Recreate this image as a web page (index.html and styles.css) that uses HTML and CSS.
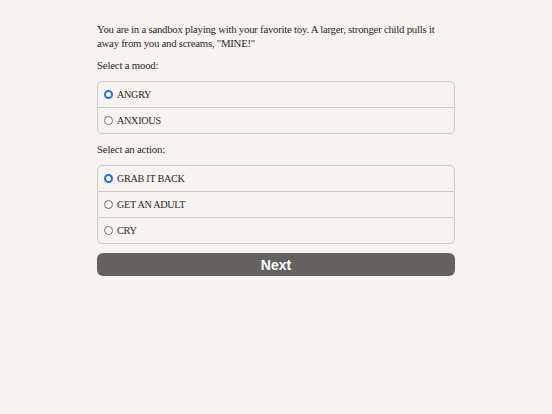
FILE: index.html
```html
<!DOCTYPE html>
<html lang="en">
  <head>
    <meta charset="UTF-8" />
    <meta name="viewport" content="width=device-width, initial-scale=1.0" />
    <title>Sandbox</title>
    <link rel="stylesheet" href="styles.css">
  </head>

  <body>
    <div class="scenario">
      <p class="story">
        You are in a sandbox playing with your favorite toy. A larger, stronger child pulls it
        away from you and screams, "MINE!"
      </p>

      <div class="label">Select a mood:</div>
      <div class="choices">
        <label class="choice">
          <input type="radio" name="mood" checked />
          ANGRY
        </label>
        <label class="choice">
          <input type="radio" name="mood" />
          ANXIOUS
        </label>
      </div>

      <div class="label">Select an action:</div>
      <div class="choices">
        <label class="choice">
          <input type="radio" name="action" checked />
          GRAB IT BACK
        </label>
        <label class="choice">
          <input type="radio" name="action" />
          GET AN ADULT
        </label>
        <label class="choice">
          <input type="radio" name="action" />
          CRY
        </label>
      </div>

      <button id="next-btn">Next</button>
    </div>
  </body>
</html>
```

FILE: styles.css
```css
body {
  margin: 0;
  background-color: #f7f3f0;
  font-family: "Liberation Serif", "DejaVu Serif", serif;
  color: #2a2a2a;
}

.scenario {
  display: flex;
  flex-direction: column;
  width: 358px;
  margin: 0 auto;
  padding-top: 22px;
}

.story {
  margin: 0 0 8px;
  font-size: 10.8px;
  letter-spacing: -0.25px;
  line-height: 14px;
}

.label {
  font-size: 10.8px;
  letter-spacing: -0.2px;
  line-height: 14px;
  margin-bottom: 9px;
}

.choices {
  display: flex;
  flex-direction: column;
  border: 1px solid #cfcbc8;
  border-radius: 5px;
  margin-bottom: 8px;
}

.choice {
  display: flex;
  align-items: center;
  height: 25px;
  padding-left: 6px;
  font-size: 10.2px;
  letter-spacing: -0.3px;
}

.choice + .choice {
  border-top: 1px solid #cfcbc8;
}

.choice input {
  appearance: none;
  box-sizing: border-box;
  width: 9px;
  height: 9px;
  margin: 0 4px 0 0;
  border: 1px solid #6f6f6f;
  border-radius: 50%;
  background-color: white;
}

.choice input:checked {
  border: 2.5px solid #1a73e8;
}

button {
  margin-top: 1px;
  height: 23px;
  border: none;
  border-radius: 6px;
  background-color: #646260;
  color: white;
  font-family: "Liberation Sans", Arial, sans-serif;
  font-size: 14px;
  font-weight: bold;
}
```
